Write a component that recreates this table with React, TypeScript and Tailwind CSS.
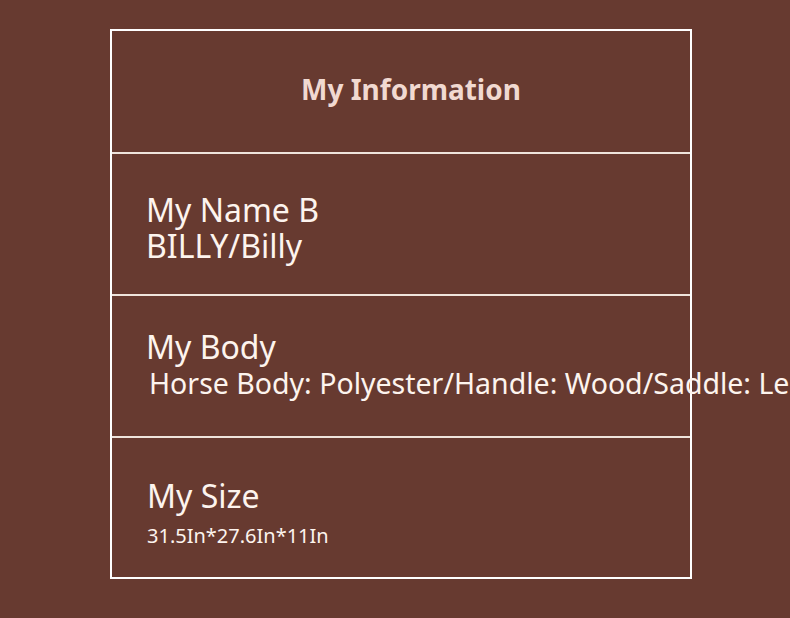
export default function App() {
  const font = { fontFamily: '"Noto Sans", "Open Sans", sans-serif' };
  return (
    <div className="w-[790px] h-[618px] bg-[#673a30] overflow-hidden" style={font}>
      <div className="ml-[110px] pt-[29px]">
        <div className="w-[582px] border-2 border-white flex flex-col">
          <div className="h-[123px] flex items-center justify-center pl-[20px] pb-[6px] border-b-2 border-[#efe4dc]">
            <span className="text-[28px] font-bold text-[#f1d9d1] leading-none">My Information</span>
          </div>
          <div className="h-[142px] flex flex-col justify-center pl-[34px] pt-[7px] border-b-2 border-[#efe4dc] text-[#fdf4ee]">
            <div className="text-[32px] leading-[36px]">My Name B</div>
            <div className="text-[32px] leading-[36px]">BILLY/Billy</div>
          </div>
          <div className="h-[142px] flex flex-col justify-center pl-[34px] border-b-2 border-[#efe4dc] text-[#fdf4ee]">
            <div className="text-[32px] leading-[36px]">My Body</div>
            <div className="text-[28.5px] leading-[36px] pl-[3px] pb-[3px] whitespace-nowrap">Horse Body: Polyester/Handle: Wood/Saddle: Leather</div>
          </div>
          <div className="h-[139px] flex flex-col justify-center pl-[35px] pt-[10px] text-[#fdf4ee]">
            <div className="text-[32px] leading-[40px]">My Size</div>
            <div className="text-[20px] leading-[28px] mt-[6px]">31.5In*27.6In*11In</div>
          </div>
        </div>
      </div>
    </div>
  );
}
